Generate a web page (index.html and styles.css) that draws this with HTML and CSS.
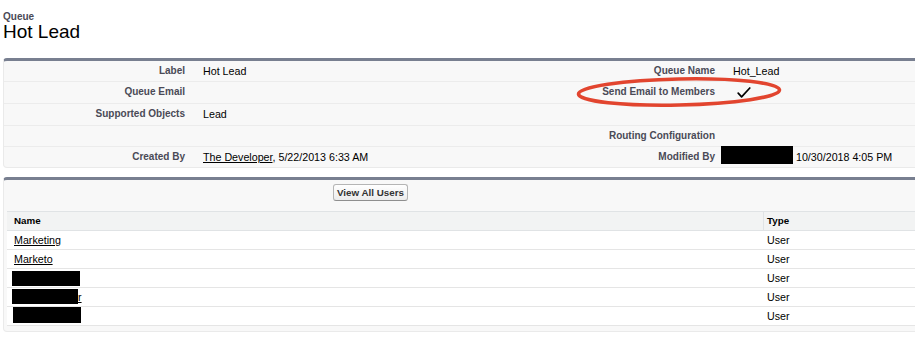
FILE: index.html
```html
<!DOCTYPE html>
<html lang="en">
<head>
<meta charset="utf-8">
<title>Queue: Hot Lead</title>
<link rel="stylesheet" href="styles.css">
</head>
<body>
<div class="page">
  <div class="title-block">
    <div class="page-type">Queue</div>
    <h1 class="page-title">Hot Lead</h1>
  </div>

  <div class="panel detail">
    <div class="detail-row">
      <div class="lbl">Label</div><div class="val">Hot Lead</div>
      <div class="lbl">Queue Name</div><div class="val">Hot_Lead</div>
    </div>
    <div class="detail-row tall">
      <div class="lbl">Queue Email</div><div class="val"></div>
      <div class="lbl">Send Email to Members</div>
      <div class="val"><svg class="check" width="14" height="11" viewBox="0 0 14 11" aria-label="Checked"><path d="M1.2 6.2 L4.6 9.8 L12.8 1" fill="none" stroke="#000" stroke-width="1.7" stroke-linecap="round" stroke-linejoin="round"/></svg></div>
    </div>
    <div class="detail-row tall">
      <div class="lbl">Supported Objects</div><div class="val">Lead</div>
      <div class="lbl"></div><div class="val"></div>
    </div>
    <div class="detail-row">
      <div class="lbl"></div><div class="val"></div>
      <div class="lbl">Routing Configuration</div><div class="val"></div>
    </div>
    <div class="detail-row last">
      <div class="lbl">Created By</div>
      <div class="val"><a href="#" class="link">The Developer</a>, 5/22/2013 6:33 AM</div>
      <div class="lbl">Modified By</div>
      <div class="val"><span class="redact redact-mod"></span> 10/30/2018 4:05 PM</div>
    </div>
  </div>

  <div class="panel related">
    <div class="related-head">
      <button class="btn" type="button">View All Users</button>
    </div>
    <div class="list">
      <div class="list-row list-header">
        <div class="cell">Name</div>
        <div class="cell type-col">Type</div>
      </div>
      <div class="list-row">
        <div class="cell"><a href="#" class="link">Marketing</a></div>
        <div class="cell type-col">User</div>
      </div>
      <div class="list-row">
        <div class="cell"><a href="#" class="link">Marketo</a></div>
        <div class="cell type-col">User</div>
      </div>
      <div class="list-row">
        <div class="cell"><span class="redact redact-a"></span></div>
        <div class="cell type-col">User</div>
      </div>
      <div class="list-row">
        <div class="cell"><span class="redact redact-b"></span><a href="#" class="link">r</a></div>
        <div class="cell type-col">User</div>
      </div>
      <div class="list-row">
        <div class="cell"><span class="redact redact-c"></span></div>
        <div class="cell type-col">User</div>
      </div>
    </div>
  </div>

  <svg class="annotation" width="214" height="38" viewBox="0 0 214 38" aria-hidden="true">
    <ellipse cx="107" cy="17" rx="100.5" ry="13" fill="none" stroke="#e2452f" stroke-width="3.6" transform="rotate(-1.2 107 17)"/>
  </svg>
</div>
</body>
</html>
```

FILE: styles.css
```css
html, body {
  margin: 0;
  padding: 0;
  background: #fff;
  overflow: hidden;
}

body {
  font-family: "Liberation Sans", Arial, Helvetica, sans-serif;
  color: #000;
}

.page {
  position: relative;
  width: 915px;
  box-sizing: border-box;
  overflow: hidden;
  padding: 11px 3px 0 3px;
}

.title-block {
  margin-bottom: 16px;
}

.page-type {
  font-size: 10px;
  font-weight: bold;
  line-height: 11px;
  color: #4a4a56;
}

.page-title {
  margin: 0;
  font-size: 19px;
  font-weight: normal;
  line-height: 20px;
  color: #000;
}

.panel {
  background: #f8f8f8;
  border: 1px solid #eaeaea;
  border-top: 3px solid #787f90;
  border-radius: 4px;
  box-sizing: border-box;
  width: 1060px;
}

/* detail section */
.detail-row {
  display: grid;
  grid-template-columns: 190px 339px 191px 1fr;
  height: 21px;
  box-sizing: border-box;
  border-bottom: 1px solid #ececec;
}

.detail-row.tall {
  height: 22px;
}

.detail-row.last {
  border-bottom: none;
  height: 20px;
}

.lbl {
  text-align: right;
  padding-right: 9px;
  font-size: 10px;
  font-weight: bold;
  line-height: 20px;
  color: #4a4a56;
  white-space: nowrap;
}

.val {
  padding-left: 9px;
  font-size: 10.7px;
  line-height: 20px;
  color: #000;
  white-space: nowrap;
}

.link {
  color: #000;
  text-decoration: underline;
}

.check {
  margin-left: 4px;
  vertical-align: -2px;
}

.redact {
  display: inline-block;
  background: #000;
}

.redact-mod {
  width: 72px;
  height: 18px;
  margin-left: -12px;
  margin-top: -2px;
  vertical-align: -3px;
}

/* related list */
.related {
  margin-top: 9px;
  padding: 0 0 5px 3px;
}

.related-head {
  padding-top: 4px;
  height: 17px;
  margin-bottom: 10px;
}

.btn {
  display: block;
  margin: 0 0 0 326px;
  height: 17px;
  padding: 0 3px;
  box-sizing: border-box;
  font-family: "Liberation Sans", Arial, Helvetica, sans-serif;
  font-size: 9.8px;
  font-weight: bold;
  line-height: 15px;
  color: #333;
  background: linear-gradient(#ffffff, #ececec);
  border: 1px solid #b5b5b5;
  border-bottom-color: #8f8f8f;
  border-radius: 3px;
}

.list {
  width: 1040px;
  background: #fff;
}

.list-row {
  display: grid;
  grid-template-columns: 756px 1fr;
  height: 19px;
  box-sizing: border-box;
  border-bottom: 1px solid #e5e5e5;
}

.list-header {
  height: 20px;
  background: #f2f3f3;
  border-top: 1px solid #e0e3e5;
  border-bottom: 1px solid #e0e3e5;
}

.cell {
  padding-left: 7px;
  font-size: 10.7px;
  line-height: 18px;
  white-space: nowrap;
}

.list-header .cell {
  font-size: 9.8px;
  font-weight: bold;
  color: #000;
}

.list-header .type-col {
  border-left: 1px solid #e0e3e5;
  padding-left: 3px;
}

.type-col {
  padding-left: 4px;
}

.redact-a {
  width: 68px;
  height: 15px;
  margin-left: -2px;
  vertical-align: -3.5px;
}

.redact-b {
  width: 66px;
  height: 15px;
  margin-left: -2px;
  vertical-align: -2.5px;
}

.redact-c {
  width: 68px;
  height: 16px;
  margin-left: -1px;
  margin-top: -1px;
  vertical-align: -2.5px;
}

/* annotation overlay */
.annotation {
  position: absolute;
  left: 572px;
  top: 75px;
}
```
